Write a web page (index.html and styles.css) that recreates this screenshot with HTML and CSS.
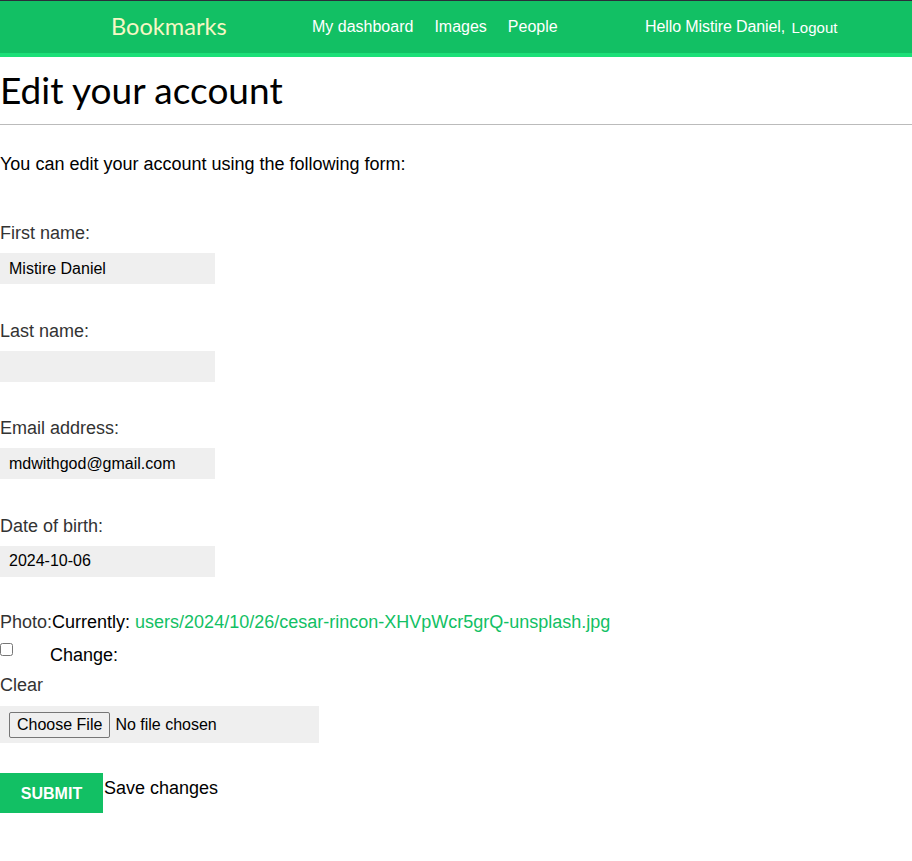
FILE: index.html
```html
<!DOCTYPE html>
<html lang="en">
<head>
<meta charset="utf-8">
<title>Edit your account</title>
<link rel="stylesheet" href="styles.css">
</head>
<body>
<header class="header">
  <span class="logo">Bookmarks</span>
  <nav class="menu">
    <a href="#">My dashboard</a>
    <a href="#">Images</a>
    <a href="#">People</a>
  </nav>
  <span class="user">Hello Mistire Daniel, <a href="#" class="logout">Logout</a></span>
</header>
<main class="content">
  <h1 class="title">Edit your account</h1>
  <hr class="rule">
  <p class="intro">You can edit your account using the following form:</p>
  <form class="form">
    <div class="field">
      <label class="label">First name:</label>
      <input class="text-input" type="text" value="Mistire Daniel">
    </div>
    <div class="field">
      <label class="label">Last name:</label>
      <input class="text-input" type="text" value="">
    </div>
    <div class="field">
      <label class="label">Email address:</label>
      <input class="text-input" type="text" value="mdwithgod@gmail.com">
    </div>
    <div class="field">
      <label class="label">Date of birth:</label>
      <input class="text-input" type="text" value="2024-10-06">
    </div>
    <div class="photo">
      <div class="photo-line"><span class="label-inline">Photo:</span>Currently: <a href="#" class="file-link">users/2024/10/26/cesar-rincon-XHVpWcr5grQ-unsplash.jpg</a></div>
      <div class="change-line"><input type="checkbox" class="check"><span class="change">Change:</span></div>
      <div class="clear">Clear</div>
      <div class="file-box"><span class="file-btn">Choose File</span><span class="file-none">No file chosen</span></div>
    </div>
    <div class="actions">
      <button type="button" class="submit">Submit</button><span class="save">Save changes</span>
    </div>
  </form>
</main>
</body>
</html>
```
FILE: styles.css
```css
html, body { margin: 0; padding: 0; }
body { font-family: "Liberation Sans", Arial, sans-serif; color: #000; background: #fff; }

.header {
  display: flex;
  align-items: center;
  height: 52px;
  border-top: 1px solid #2b2d3a;
  border-bottom: 4px solid #1cdf78;
  background: #12c064;
  padding-left: 111px;
  color: #fff;
}
.logo {
  font-family: "Lato", sans-serif;
  font-size: 23.6px;
  color: #f6f7c4;
  width: 201px;
  position: relative;
  top: -1px;
}
.menu { display: flex; gap: 21px; width: 333px; }
.menu a { color: #fff; text-decoration: none; font-size: 16px; }
.user { font-size: 16px; color: #fff; letter-spacing: -0.1px; }
.logout { color: #fff; text-decoration: none; font-size: 15px; position: relative; top: 1px; letter-spacing: 0; margin-left: 2px; }

.content { padding: 0; }
.title {
  font-family: "Lato", sans-serif;
  font-weight: 400;
  font-size: 37px;
  margin: 0;
  padding-top: 11px;
  line-height: 44px;
  color: #000;
}
.rule { border: 0; border-top: 1px solid #bbb; margin: 12px 0 0; }
.intro { margin: 29px 0 0; font-size: 18px; line-height: 21px; }

.form { display: flex; flex-direction: column; margin-top: 48px; }
.field { display: flex; flex-direction: column; align-items: flex-start; margin-bottom: 36.5px; }
.label { color: #333; font-size: 18px; line-height: 21px; margin-bottom: 9px; }
.text-input {
  width: 215px;
  height: 31px;
  box-sizing: border-box;
  border: 0;
  background: #efefef;
  padding: 0 9px;
  font-family: "Liberation Sans", Arial, sans-serif;
  font-size: 16px;
  color: #000;
  outline: none;
}

.photo { display: flex; flex-direction: column; align-items: flex-start; }
.photo-line { font-size: 18px; line-height: 21px; margin-top: -1px; }
.label-inline { color: #333; }
.file-link { color: #12c064; text-decoration: none; }
.change-line { display: flex; align-items: flex-start; margin-top: 10px; height: 32px; }
.check { margin: 0; width: 13px; height: 13px; }
.change { margin-left: 37px; font-size: 18px; line-height: 21px; margin-top: 2px; }
.clear { color: #333; font-size: 18px; line-height: 21px; }
.file-box {
  display: flex;
  align-items: center;
  width: 319px;
  height: 37px;
  box-sizing: border-box;
  background: #efefef;
  padding-left: 9px;
  margin-top: 10px;
  font-size: 16px;
}
.file-btn {
  border: 1px solid #767676;
  border-radius: 2px;
  background: #efefef;
  padding: 2px 7px 3px;
  font-size: 16px;
  line-height: 19px;
  margin-right: 5px;
}
.file-none { font-size: 16px; }

.actions { display: flex; align-items: flex-start; margin-top: 30px; }
.submit {
  width: 103px;
  height: 40px;
  border: 0;
  background: #12c064;
  color: #fff;
  font-family: "Liberation Sans", Arial, sans-serif;
  font-weight: bold;
  font-size: 16px;
  text-transform: uppercase;
  padding: 0;
  padding-top: 1px;
}
.save { font-size: 18px; line-height: 21px; margin-left: 1px; margin-top: 5px; }
```
